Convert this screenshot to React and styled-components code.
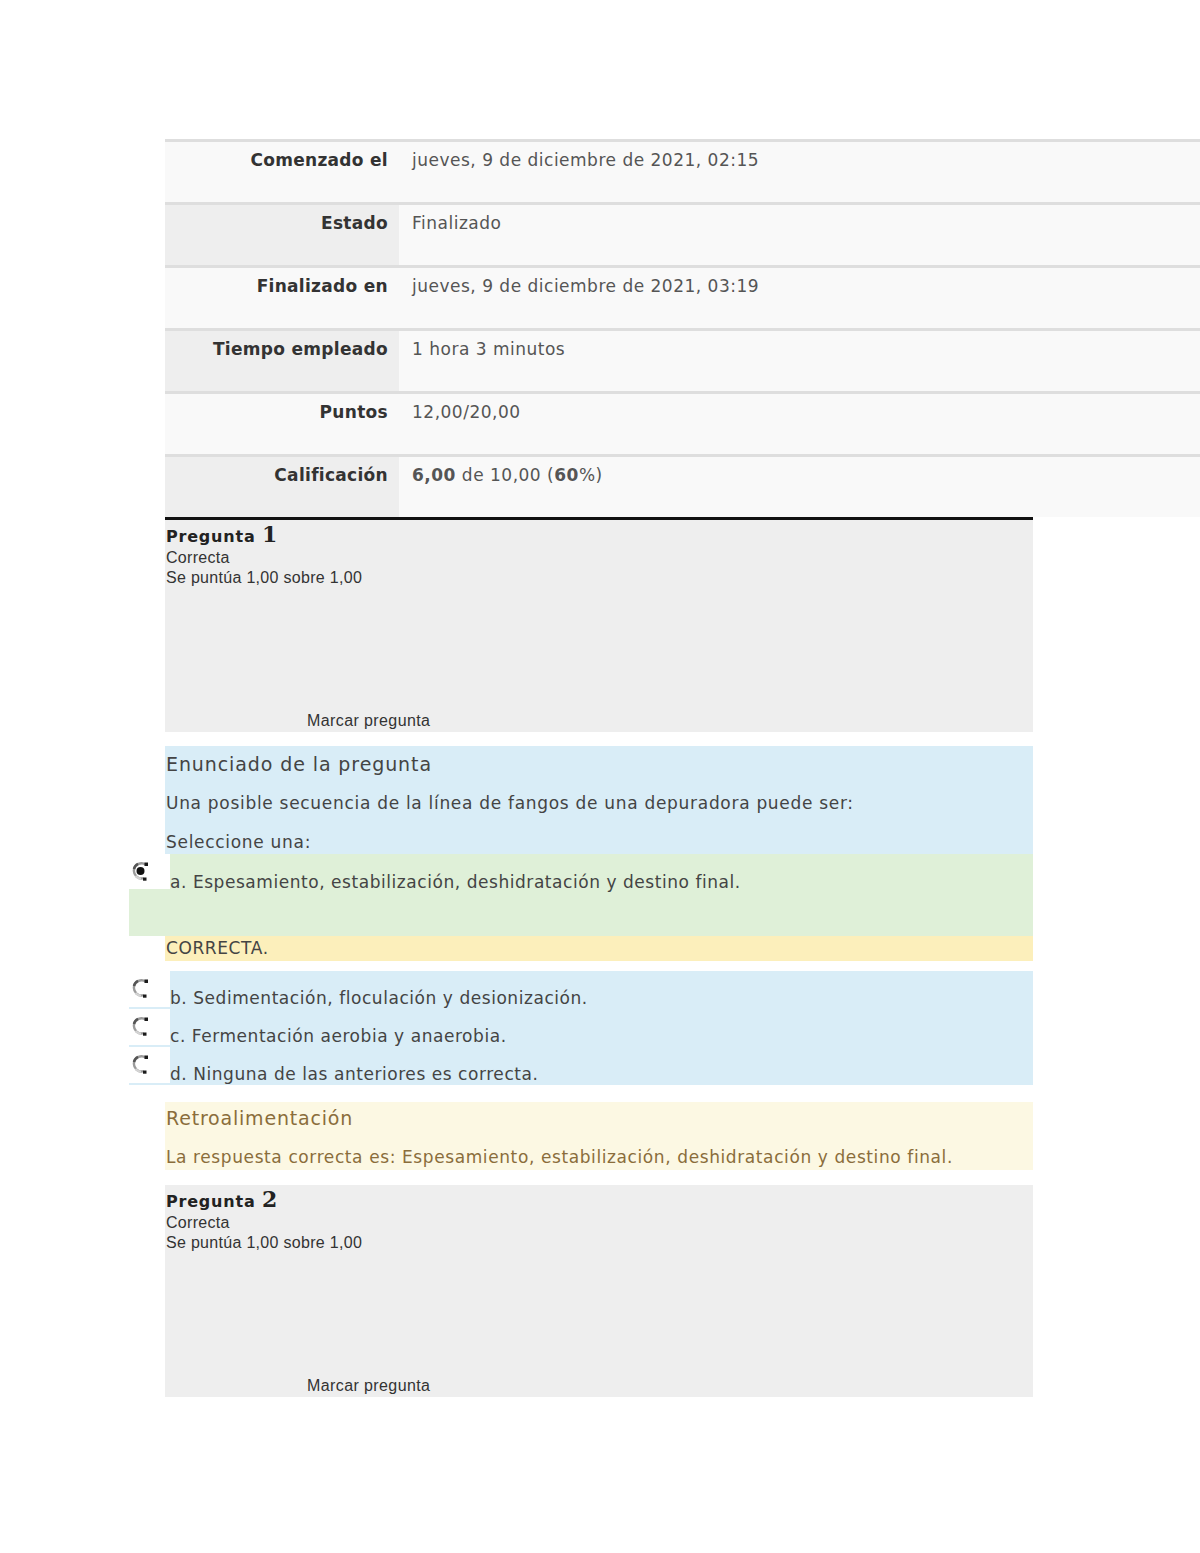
import styled, { createGlobalStyle } from "styled-components";

const GlobalStyle = createGlobalStyle`
  body {
    margin: 0;
    background: #fff;
    font-family: "DejaVu Sans", "Liberation Sans", sans-serif;
    color: #333;
  }
`;

const summary = [
  { label: "Comenzado el", value: "jueves, 9 de diciembre de 2021, 02:15" },
  { label: "Estado", value: "Finalizado" },
  { label: "Finalizado en", value: "jueves, 9 de diciembre de 2021, 03:19" },
  { label: "Tiempo empleado", value: "1 hora 3 minutos" },
  { label: "Puntos", value: "12,00/20,00" },
  {
    label: "Calificación",
    value: (
      <>
        <b>6,00</b> de 10,00 (<b>60</b>%)
      </>
    ),
  },
];

const options = [
  { key: "b", text: "b. Sedimentación, floculación y desionización." },
  { key: "c", text: "c. Fermentación aerobia y anaerobia." },
  { key: "d", text: "d. Ninguna de las anteriores es correcta." },
];

function RadioIcon({ checked }) {
  return (
    <svg width="20" height="20" viewBox="0 0 20 20">
      <path
        d="M14.8 3.6 A7.6 7.6 0 1 0 12.6 17.2"
        fill="none"
        stroke="#9b9b9b"
        strokeWidth="2.4"
      />
      <path d="M2.9 8 A7.6 7.6 0 0 1 7 2.8" fill="none" stroke="#555" strokeWidth="2.4" />
      <path d="M4.5 15 A7.6 7.6 0 0 0 10 17.6" fill="none" stroke="#d4d4d4" strokeWidth="2" />
      <rect x="13.5" y="1.5" width="3.5" height="3.5" fill="#1a1a1a" />
      <rect x="12" y="16.5" width="3.5" height="3.2" fill="#1a1a1a" />
      {checked && <circle cx="9.5" cy="10" r="4" fill="#111" />}
    </svg>
  );
}

function QuestionInfo({ number }) {
  return (
    <InfoBox>
      <QTitle>
        Pregunta <QNum>{number}</QNum>
      </QTitle>
      <InfoLine>Correcta</InfoLine>
      <InfoLine>Se puntúa 1,00 sobre 1,00</InfoLine>
      <FlagLink>Marcar pregunta</FlagLink>
    </InfoBox>
  );
}

export default function App() {
  return (
    <>
      <GlobalStyle />
      <Page>
        <SummaryTable>
          {summary.map((row, i) => (
            <SummaryRow key={row.label}>
              <SummaryLabel $shaded={i % 2 === 1}>{row.label}</SummaryLabel>
              <SummaryValue>{row.value}</SummaryValue>
            </SummaryRow>
          ))}
        </SummaryTable>

        <Column>
          <QuestionHead>
            <QuestionInfo number="1" />
          </QuestionHead>

          <Formulation>
            <FormTitle>Enunciado de la pregunta</FormTitle>
            <FormText>
              Una posible secuencia de la línea de fangos de una depuradora puede ser:
            </FormText>
            <FormText>Seleccione una:</FormText>
          </Formulation>

          <Answers>
            <AnswerRow>
              <RadioCell $fill="#dff0d8" $fillFrom={35}>
                <RadioIcon checked />
              </RadioCell>
              <AnswerText $bg="#dff0d8" $tall>
                a. Espesamiento, estabilización, deshidratación y destino final.
              </AnswerText>
            </AnswerRow>
            <Verdict>CORRECTA.</Verdict>
            <OtherOptions>
              {options.map((opt) => (
                <AnswerRow key={opt.key}>
                  <RadioCell $line>
                    <RadioIcon />
                  </RadioCell>
                  <AnswerText $bg="#d9edf7">{opt.text}</AnswerText>
                </AnswerRow>
              ))}
            </OtherOptions>
          </Answers>

          <Feedback>
            <FeedbackTitle>Retroalimentación</FeedbackTitle>
            <FeedbackText>
              La respuesta correcta es: Espesamiento, estabilización, deshidratación y
              destino final.
            </FeedbackText>
          </Feedback>

          <QuestionInfo number="2" />
        </Column>
      </Page>
    </>
  );
}

const Page = styled.div`
  padding: 139px 0 156px 165px;
`;

const SummaryTable = styled.div`
  display: flex;
  flex-direction: column;
`;

const SummaryRow = styled.div`
  display: grid;
  grid-template-columns: 234px 1fr;
  height: 63px;
  box-sizing: border-box;
  border-top: 3px solid #dedede;
  background: #f9f9f9;
  font-size: 17px;
  line-height: 20px;
`;

const SummaryLabel = styled.div`
  background: ${(p) => (p.$shaded ? "#eeeeee" : "#f9f9f9")};
  text-align: right;
  font-weight: bold;
  color: #333;
  letter-spacing: 0.3px;
  padding: 8px 11px 0 0;
`;

const SummaryValue = styled.div`
  color: #555;
  letter-spacing: 0.5px;
  padding: 8px 0 0 13px;
`;

const Column = styled.div`
  width: 868px;
  display: flex;
  flex-direction: column;
`;

const QuestionHead = styled.div`
  border-top: 3px solid #111;
  margin-bottom: 14px;
`;

const InfoBox = styled.div`
  height: 212px;
  box-sizing: border-box;
  background: #eeeeee;
  padding: 3px 0 0 1px;
  display: flex;
  flex-direction: column;
  font-family: "Liberation Sans", sans-serif;
  color: #333;
`;

const QTitle = styled.div`
  font-family: "DejaVu Sans", sans-serif;
  font-weight: bold;
  font-size: 16px;
  line-height: 22px;
  letter-spacing: 0.8px;
  color: #222;
`;

const QNum = styled.span`
  font-family: "DejaVu Serif", serif;
  font-size: 22px;
  letter-spacing: 0;
`;

const InfoLine = styled.div`
  font-size: 16px;
  line-height: 20px;
  letter-spacing: 0.3px;
`;

const FlagLink = styled.div`
  margin-top: auto;
  margin-left: 141px;
  font-size: 16px;
  line-height: 22px;
  letter-spacing: 0.4px;
`;

const Formulation = styled.div`
  background: #d9edf7;
  padding: 6px 0 0 1px;
  height: 108px;
  box-sizing: border-box;
  color: #444;
`;

const FormTitle = styled.div`
  font-size: 19px;
  line-height: 24px;
  letter-spacing: 0.9px;
  margin-bottom: 16px;
`;

const FormText = styled.div`
  font-size: 17px;
  line-height: 22px;
  letter-spacing: 0.7px;
  margin-bottom: 17px;
`;

const Answers = styled.div`
  margin-left: -36px;
  display: flex;
  flex-direction: column;
`;

const AnswerRow = styled.div`
  display: flex;
`;

const RadioCell = styled.div`
  width: 41px;
  flex: none;
  box-sizing: border-box;
  padding: 7px 0 0 2px;
  background: ${(p) =>
    p.$fill
      ? `linear-gradient(to bottom, transparent ${p.$fillFrom}px, ${p.$fill} ${p.$fillFrom}px)`
      : "transparent"};
  border-bottom: ${(p) => (p.$line ? "2px solid #d9edf7" : "none")};
`;

const AnswerText = styled.div`
  flex: 1;
  background: ${(p) => p.$bg};
  color: #444;
  font-size: 17px;
  line-height: 22px;
  letter-spacing: 0.55px;
  height: ${(p) => (p.$tall ? "82px" : "38px")};
  box-sizing: border-box;
  padding-top: ${(p) => (p.$tall ? "17px" : "16px")};
`;

const Verdict = styled.div`
  margin-left: 36px;
  padding-left: 1px;
  background: #fcefbb;
  color: #444;
  font-size: 17px;
  line-height: 25px;
  letter-spacing: 0.6px;
  height: 25px;
  margin-bottom: 10px;
`;

const OtherOptions = styled.div`
  display: flex;
  flex-direction: column;
`;

const Feedback = styled.div`
  margin-top: 17px;
  background: #fcf8e3;
  color: #8a6d3b;
  height: 68px;
  box-sizing: border-box;
  padding: 4px 0 0 1px;
  margin-bottom: 15px;
`;

const FeedbackTitle = styled.div`
  font-size: 19px;
  line-height: 24px;
  letter-spacing: 0.8px;
  margin-bottom: 16px;
`;

const FeedbackText = styled.div`
  font-size: 17px;
  line-height: 22px;
  letter-spacing: 0.6px;
`;
